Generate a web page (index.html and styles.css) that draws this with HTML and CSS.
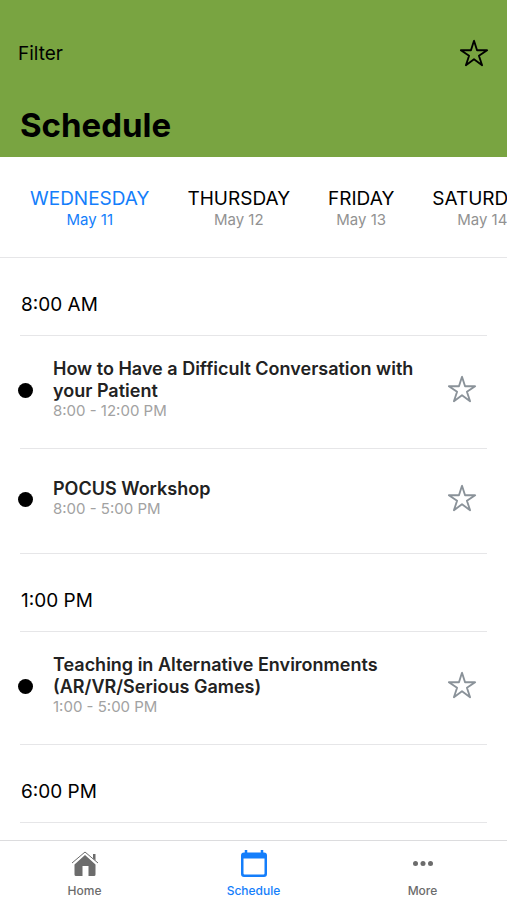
FILE: index.html
```html
<!DOCTYPE html>
<html lang="en">
<head>
    <meta charset="UTF-8">
    <meta name="viewport" content="width=device-width, initial-scale=1.0">
    <title>Schedule</title>
    <link rel="stylesheet" href="styles.css">
</head>
<body>
    <svg class="sprite" aria-hidden="true">
        <symbol id="star" viewBox="0 0 512 512">
            <path d="M480 208H308L256 48l-52 160H32l140 96-54 160 138-100 138 100-54-160z" fill="none" stroke="currentColor" stroke-width="32" stroke-linejoin="round"/>
        </symbol>
    </svg>

    <header class="header">
        <div class="toolbar">
            <button type="button" class="filter-btn">Filter</button>
            <button type="button" class="star-btn" aria-label="Favorites"><svg><use href="#star"/></svg></button>
        </div>
        <h1>Schedule</h1>
    </header>

    <nav class="days">
        <button type="button" class="day active">WEDNESDAY<span>May 11</span></button>
        <button type="button" class="day">THURSDAY<span>May 12</span></button>
        <button type="button" class="day">FRIDAY<span>May 13</span></button>
        <button type="button" class="day">SATURDAY<span>May 14</span></button>
    </nav>

    <main class="content">
        <section>
            <h2>8:00 AM</h2>
            <article class="session">
                <span class="dot"></span>
                <div class="info">
                    <h3>How to Have a Difficult Conversation with your Patient</h3>
                    <p>8:00 - 12:00 PM</p>
                </div>
                <button type="button" class="star-btn" aria-label="Add to favorites"><svg><use href="#star"/></svg></button>
            </article>
            <article class="session">
                <span class="dot"></span>
                <div class="info">
                    <h3>POCUS Workshop</h3>
                    <p>8:00 - 5:00 PM</p>
                </div>
                <button type="button" class="star-btn" aria-label="Add to favorites"><svg><use href="#star"/></svg></button>
            </article>
        </section>
        <section>
            <h2>1:00 PM</h2>
            <article class="session">
                <span class="dot"></span>
                <div class="info">
                    <h3>Teaching in Alternative Environments (AR/VR/Serious Games)</h3>
                    <p>1:00 - 5:00 PM</p>
                </div>
                <button type="button" class="star-btn" aria-label="Add to favorites"><svg><use href="#star"/></svg></button>
            </article>
        </section>
        <section>
            <h2>6:00 PM</h2>
        </section>
    </main>

    <nav class="tabbar">
        <a href="#home" class="tab">
            <svg viewBox="0 0 28 28">
                <path d="M14 5L3.500 14.500V24.500q0 1.500 1.500 1.500H11.500V16h6V26H23q1.500 0 1.500-1.500V14.500z" fill="currentColor"/>
                <path d="M1 13L14 2l13 11" fill="none" stroke="currentColor" stroke-width="1"/>
                <path d="M22 4h2.500v6.500L22 8.500z" fill="currentColor"/>
            </svg>
            Home
        </a>
        <a href="#schedule" class="tab active">
            <svg viewBox="0 0 28 28">
                <path d="M4 2.500h20a3 3 0 0 1 3 3V24a3 3 0 0 1-3 3H4a3 3 0 0 1-3-3V5.500a3 3 0 0 1 3-3zM3.500 8.500v15q0 1 1 1h19q1 0 1-1V8.500z" fill="currentColor" fill-rule="evenodd"/>
                <path d="M6 0v4M22 0v4" stroke="currentColor" stroke-width="2.500"/>
            </svg>
            Schedule
        </a>
        <a href="#more" class="tab">
            <svg viewBox="0 0 28 28">
                <g fill="currentColor">
                    <circle cx="6.500" cy="13.500" r="2.500"/>
                    <circle cx="14" cy="13.500" r="2.500"/>
                    <circle cx="21.500" cy="13.500" r="2.500"/>
                </g>
            </svg>
            More
        </a>
    </nav>
</body>
</html>
```
FILE: styles.css
```css
* {
    box-sizing: border-box;
}
body {
    margin: 0;
    height: 100vh;
    display: flex;
    flex-direction: column;
    font-family: Inter, "Liberation Sans", sans-serif;
    background-color: #fff;
    color: #000;
}
button {
    padding: 0;
    border: none;
    background: none;
    font: inherit;
    color: inherit;
    cursor: pointer;
}
h1, h2, h3, p {
    margin: 0;
}
.sprite {
    display: none;
}
.header {
    flex-shrink: 0;
    padding: 37px 18px 12px;
    background-color: #79a441;
}
.toolbar {
    display: flex;
    justify-content: space-between;
    align-items: center;
    height: 32px;
}
.header .filter-btn {
    font-size: 19px;
}
.star-btn {
    flex-shrink: 0;
    height: 30px;
}
.star-btn svg {
    display: block;
    width: 30px;
    height: 30px;
}
.header h1 {
    margin: 36px 2px 0;
    font-size: 33px;
    line-height: 40px;
    font-weight: 700;
}
.days {
    flex-shrink: 0;
    display: flex;
    gap: 38px;
    height: 101px;
    padding: 4px 30px 0;
    align-items: center;
    overflow-x: auto;
    scrollbar-width: none;
    border-bottom: 1px solid #e6e6e8;
}
.day {
    flex-shrink: 0;
    font-size: 19px;
    line-height: 22px;
}
.day span {
    display: block;
    font-size: 15px;
    line-height: 20px;
    color: #929292;
}
.day.active, .day.active span {
    color: #147efb;
}
.content {
    flex: 1;
    min-height: 0;
    overflow-y: auto;
    scrollbar-width: none;
    padding: 0 20px;
}
.content h2 {
    height: 78px;
    padding: 33px 1px 0;
    border-bottom: 1px solid #e6e6e8;
    font-size: 19px;
    line-height: 28px;
    font-weight: 400;
}
.session {
    display: flex;
    align-items: center;
    min-height: 105px;
    padding: 22px 10px 28px 0;
    border-bottom: 1px solid #e6e6e8;
}
.dot {
    flex-shrink: 0;
    width: 15px;
    height: 15px;
    margin: 2px 0 0 -2px;
    border-radius: 50%;
    background-color: #000;
}
.info {
    flex: 1;
    padding: 0 28px 0 20px;
}
.info h3 {
    font-size: 18px;
    line-height: 22px;
    font-weight: 600;
    color: #222;
}
.info p {
    font-size: 15px;
    line-height: 18px;
    color: #a2a2a2;
}
.session .star-btn {
    color: #8a9299;
}
.tabbar {
    flex-shrink: 0;
    display: flex;
    height: 60px;
    border-top: 1px solid #dcdcde;
}
.tab {
    flex: 1;
    display: flex;
    flex-direction: column;
    align-items: center;
    padding-top: 9px;
    font-size: 12px;
    line-height: 16px;
    font-weight: 500;
    color: #6c6c6c;
    text-decoration: none;
}
.tab svg {
    width: 28px;
    height: 28px;
    margin-bottom: 5px;
}
.tab.active {
    color: #147efb;
}
```
